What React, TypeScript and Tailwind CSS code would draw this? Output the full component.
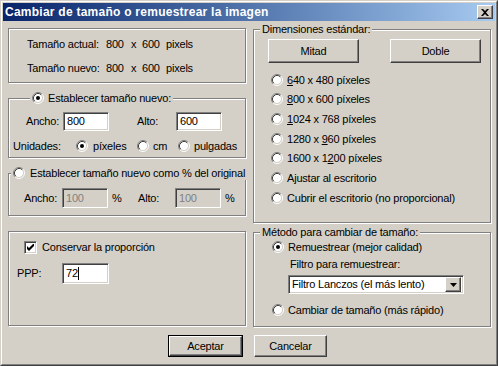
import type { ReactNode } from "react";

const raised =
  "border border-t-white border-l-white border-b-[#404040] border-r-[#404040] shadow-[inset_-1px_-1px_0_#808080]";
const sunken =
  "border border-t-[#808080] border-l-[#808080] border-b-white border-r-white shadow-[inset_1px_1px_0_#404040,inset_-1px_-1px_0_#d4d0c8]";
const etched = "border border-[#808080] shadow-[1px_1px_0_#fff,inset_1px_1px_0_#fff]";

function Radio({ checked = false }: { checked?: boolean }) {
  return (
    <svg width="12" height="12" viewBox="0 0 12 12" className="shrink-0">
      <circle cx="6" cy="6" r="4.5" fill="#fff" />
      <path d="M2.11 9.89A5.5 5.5 0 0 1 9.89 2.11" stroke="#808080" fill="none" />
      <path d="M9.89 2.11A5.5 5.5 0 0 1 2.11 9.89" stroke="#fff" fill="none" />
      <path d="M2.82 9.18A4.5 4.5 0 0 1 9.18 2.82" stroke="#404040" fill="none" />
      <path d="M9.18 2.82A4.5 4.5 0 0 1 2.82 9.18" stroke="#d4d0c8" fill="none" />
      {checked && <circle cx="6" cy="6" r="2" fill="#000" />}
    </svg>
  );
}

function Checkbox() {
  return (
    <span className={`${sunken} w-[13px] h-[13px] bg-white flex items-center justify-center shrink-0`}>
      <svg width="7" height="7" viewBox="0 0 7 7">
        <polygon points="0,2 2,4 7,-1 7,2 2,7 0,5" fill="#000" />
      </svg>
    </span>
  );
}

function Field({ value, w, disabled = false, caret = false }: { value: string; w: string; disabled?: boolean; caret?: boolean }) {
  return (
    <div
      className={`${sunken} ${w} h-full flex items-center pl-[3px] ${
        disabled ? "bg-[#d4d0c8] text-[#808080]" : "bg-white"
      }`}
    >
      {value}
      {caret && <span className="w-px h-[13px] bg-black" />}
    </div>
  );
}

function Group({ title, className, children }: { title?: ReactNode; className: string; children: ReactNode }) {
  return (
    <div className={`${etched} flex flex-col ${className}`}>
      {title}
      {children}
    </div>
  );
}

function Legend({ ml, children }: { ml: string; children: ReactNode }) {
  return (
    <div className={`-mt-[8px] ${ml} self-start px-[2px] h-[14px] leading-[14px] bg-[#d4d0c8] flex items-center gap-[4px]`}>
      {children}
    </div>
  );
}

const presets: ReactNode[] = [
  <><u>6</u>40 x 480 píxeles</>,
  <><u>8</u>00 x 600 píxeles</>,
  <><u>1</u>024 x 768 píxeles</>,
  <>1280 x <u>9</u>60 píxeles</>,
  <>1600 x 1<u>2</u>00 píxeles</>,
  <>Ajustar al escritorio</>,
  <>Cubrir el escritorio (no proporcional)</>,
];

export default function App() {
  return (
    <div className="w-[498px] h-[366px] flex border border-t-[#d4d0c8] border-l-[#d4d0c8] border-b-[#404040] border-r-[#404040] font-['Liberation_Sans',Arial,sans-serif] text-[11px] tracking-[-0.2px] text-black">
      <div className="flex-1 flex flex-col p-px bg-[#d4d0c8] border border-t-white border-l-white border-b-[#808080] border-r-[#808080]">
        {/* title bar */}
        <div className="h-[18px] flex items-center justify-between bg-linear-to-r from-[#0a246a] to-[#a6caf0] pl-[2px] pr-[2px]">
          <span className="text-white font-bold text-[12px] tracking-[0.25px]">Cambiar de tamaño o remuestrear la imagen</span>
          <span className={`${raised} bg-[#d4d0c8] w-[16px] h-[14px] flex items-center justify-center`}>
            <svg width="8" height="7" viewBox="0 0 8 7">
              <path d="M0 0h2l2 2 2-2h2L5 3.5 8 7H6L4 5 2 7H0l3-3.5z" fill="#000" />
            </svg>
          </span>
        </div>

        <div className="flex pl-[5px] gap-[7px]">
          {/* left column */}
          <div className="w-[238px] flex flex-col">
            <div className={`${etched} mt-[7px] h-[55px] flex flex-col pl-[18px] pt-[8px] gap-[10px]`}>
              {["Tamaño actual:", "Tamaño nuevo:"].map((label) => (
                <div key={label} className="flex h-[14px] items-center">
                  <span className="w-[79px]">{label}</span>
                  <span className="w-[25px]">800</span>
                  <span className="w-[11px]">x</span>
                  <span className="w-[24px]">600</span>
                  <span>pixels</span>
                </div>
              ))}
            </div>

            <Group
              className="mt-[15px] h-[60px]"
              title={
                <Legend ml="ml-[21px]">
                  <Radio checked />
                  <span>Establecer tamaño nuevo:</span>
                </Legend>
              }
            >
              <div className="mt-[7px] h-[19px] flex items-center pl-[17px]">
                <span className="w-[37px]">Ancho:</span>
                <Field value="800" w="w-[46px]" />
                <span className="ml-[28px] w-[39px]">Alto:</span>
                <Field value="600" w="w-[46px]" />
              </div>
              <div className="mt-[8px] h-[14px] flex items-center pl-[4px]">
                <span className="w-[63px]">Unidades:</span>
                <Radio checked />
                <span className="ml-[5px] w-[44px]">píxeles</span>
                <Radio />
                <span className="ml-[4px] w-[25px]">cm</span>
                <Radio />
                <span className="ml-[4px]">pulgadas</span>
              </div>
            </Group>

            <Group
              className="mt-[15px] h-[43px]"
              title={
                <Legend ml="ml-[2px]">
                  <Radio />
                  <span className="ml-[1px] whitespace-nowrap">Establecer tamaño nuevo como % del original</span>
                </Legend>
              }
            >
              <div className="mt-[8px] h-[20px] flex items-center pl-[15px]">
                <span className="w-[38px]">Ancho:</span>
                <Field value="100" w="w-[46px]" disabled />
                <span className="ml-[4px] w-[26px]">%</span>
                <span className="w-[37px]">Alto:</span>
                <Field value="100" w="w-[46px]" disabled />
                <span className="ml-[4px]">%</span>
              </div>
            </Group>

            <div className={`${etched} mt-[15px] h-[95px] flex flex-col pt-[9px]`}>
              <div className="h-[13px] flex items-center pl-[15px] gap-[5px]">
                <Checkbox />
                <span>Conservar la proporción</span>
              </div>
              <div className="mt-[9px] h-[21px] flex items-center pl-[8px]">
                <span className="w-[45px]">PPP:</span>
                <Field value="72" w="w-[47px]" caret />
              </div>
            </div>
          </div>

          {/* right column */}
          <div className="w-[238px] flex flex-col">
            <Group
              className="mt-[8px] h-[194px]"
              title={
                <Legend ml="ml-[6px]">
                  <span>Dimensiones estándar:</span>
                </Legend>
              }
            >
              <div className="mt-[3px] flex pl-[14px] gap-[31px]">
                <button className={`${raised} w-[91px] h-[24px] bg-[#d4d0c8]`}>Mitad</button>
                <button className={`${raised} w-[91px] h-[24px] bg-[#d4d0c8]`}>Doble</button>
              </div>
              <div className="mt-[7px] flex flex-col">
                {presets.map((p, i) => (
                  <div key={i} className="h-[19.67px] flex items-center pl-[17px] gap-[4px]">
                    <Radio />
                    <span>{p}</span>
                  </div>
                ))}
              </div>
            </Group>

            <Group
              className="mt-[9px] h-[95px]"
              title={
                <Legend ml="ml-[6px]">
                  <span>Método para cambiar de tamaño:</span>
                </Legend>
              }
            >
              <div className="mt-[1px] h-[14px] flex items-center pl-[18px] gap-[4px]">
                <Radio checked />
                <span>Remuestrear (mejor calidad)</span>
              </div>
              <div className="mt-[3px] h-[14px] flex items-center pl-[36px]">Filtro para remuestrear:</div>
              <div className="mt-[4px] ml-[34px]">
                <div className={`${sunken} w-[176px] h-[19px] bg-white flex items-center p-[2px]`}>
                  <span className="flex-1 pl-[1px]">Filtro Lanczos (el más lento)</span>
                  <span className={`${raised} bg-[#d4d0c8] w-[16px] h-[15px] flex items-center justify-center`}>
                    <svg width="7" height="4" viewBox="0 0 7 4">
                      <path d="M0 0h7L3.5 4z" fill="#000" />
                    </svg>
                  </span>
                </div>
              </div>
              <div className="mt-[9px] h-[14px] flex items-center pl-[18px] gap-[4px]">
                <Radio />
                <span>Cambiar de tamaño (más rápido)</span>
              </div>
            </Group>
          </div>
        </div>

        {/* buttons */}
        <div className="mt-[8px] flex pl-[165px] gap-[11px]">
          <div className="w-[75px] h-[22px] border border-black flex">
            <button className={`${raised} flex-1 bg-[#d4d0c8]`}>Aceptar</button>
          </div>
          <button className={`${raised} w-[73px] h-[22px] bg-[#d4d0c8]`}>Cancelar</button>
        </div>
      </div>
    </div>
  );
}
